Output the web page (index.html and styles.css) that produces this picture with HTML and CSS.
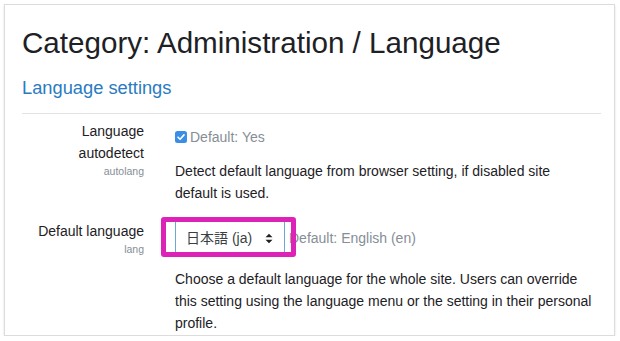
FILE: index.html
```html
<!DOCTYPE html>
<html>
<head>
<meta charset="utf-8">
<link rel="stylesheet" href="styles.css">
</head>
<body>
<div class="card">
  <h2 class="title">Category: Administration / Language</h2>
  <h3 class="section">Language settings</h3>
  <div class="rows">
    <div class="row">
      <div class="label">
        <div class="name">Language autodetect</div>
        <div class="key">autolang</div>
      </div>
      <div class="field">
        <div class="control">
          <span class="check"><svg width="12" height="12" viewBox="0 0 12 12"><rect x="0" y="0" width="12" height="12" rx="2.5" fill="#3b8ee6"/><path d="M3 6.2 L5.1 8.3 L9 3.9" fill="none" stroke="#fff" stroke-width="1.6" stroke-linecap="round" stroke-linejoin="round"/></svg></span>
          <span class="default">Default: Yes</span>
        </div>
        <p class="desc">Detect default language from browser setting, if disabled site default is used.</p>
      </div>
    </div>
    <div class="row">
      <div class="label">
        <div class="name">Default language</div>
        <div class="key">lang</div>
      </div>
      <div class="field">
        <div class="control sel-wrap">
          <div class="select">
            <span class="sel-text">日本語 (ja)</span>
            <svg class="arrows" width="8" height="11" viewBox="0 0 8 11"><path d="M0.5 4.3 L4 0.8 L7.5 4.3 Z M0.5 6.7 L4 10.2 L7.5 6.7 Z" fill="#222"/></svg>
          </div>
          <span class="default def2">Default: English (en)</span>
          <div class="highlight"></div>
        </div>
        <p class="desc">Choose a default language for the whole site. Users can override this setting using the language menu or the setting in their personal profile.</p>
      </div>
    </div>
  </div>
</div>
</body>
</html>
```

FILE: styles.css
```css
html, body {
  margin: 0;
  padding: 0;
  background: #fff;
}
body {
  padding: 4px 5px 0 4px;
  font-family: "Liberation Sans", Arial, "Noto Sans CJK JP", sans-serif;
  color: #1d2125;
}
.card {
  border: 1px solid #dcdcdc;
  box-shadow: 0 1px 2px rgba(0,0,0,0.12);
  padding: 21px 13px 0 17px;
  height: 332px;
  box-sizing: border-box;
  overflow: hidden;
}
.title {
  margin: 0;
  font-size: 29.6px;
  font-weight: 400;
  line-height: 34px;
  color: #1d2125;
}
.section {
  margin: 17px 0 0 0;
  font-size: 18.3px;
  font-weight: 400;
  line-height: 21px;
  color: #2a7bc0;
  padding-bottom: 15px;
  border-bottom: 1px solid #e2e2e2;
}
.rows {
  padding-top: 6px;
}
.row {
  display: grid;
  grid-template-columns: 122px 1fr;
  column-gap: 31px;
}
.label {
  text-align: right;
  font-size: 14px;
  line-height: 22px;
}
.key {
  font-size: 10.5px;
  line-height: 14px;
  color: #868e96;
}
.field {
  font-size: 14px;
  line-height: 22px;
}
.control {
  display: flex;
  align-items: center;
  padding-top: 6px;
  height: 22px;
}
.check {
  display: inline-flex;
  width: 12px;
  height: 12px;
  margin-right: 3px;
}
.default {
  color: #868e96;
}
.desc {
  margin: 12px 0 0 0;
  max-width: 420px;
  color: #1d2125;
}
.row + .row {
  margin-top: 16px;
}
.sel-wrap {
  position: relative;
  padding-top: 0;
  height: 34px;
  margin-top: 1px;
}
.select {
  width: 110px;
  height: 34px;
  box-sizing: border-box;
  border-left: 1px solid #6aa8d8;
  border-right: 1px solid #6aa8d8;
  display: flex;
  align-items: center;
  padding: 0 11px 0 10px;
  justify-content: space-between;
  color: #3a3f44;
}
.def2 {
  margin-left: 4px;
}
.highlight {
  position: absolute;
  left: -14px;
  top: -4px;
  width: 135px;
  height: 40px;
  box-sizing: border-box;
  border: 5px solid #dd22b8;
  border-radius: 3px;
}
.row + .row .desc {
  margin-top: 13px;
}
```
